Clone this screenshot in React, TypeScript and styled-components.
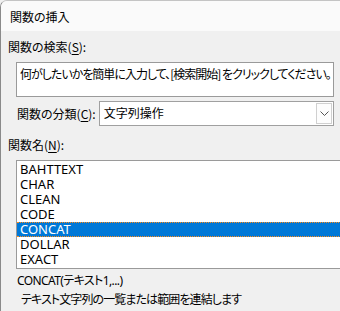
import React from 'react'
import styled, {createGlobalStyle} from 'styled-components'

const GlobalStyle = createGlobalStyle`
    html, body {
        margin: 0;
        padding: 0;
        background: #f0f0f0;
    }
    body {
        font-family: "Noto Sans CJK JP", "Liberation Sans", sans-serif;
        font-size: 12px;
        color: #000;
        font-feature-settings: "palt";
    }
`

const Window = styled.div`
    width: 340px;
    height: 311px;
    box-sizing: border-box;
    border-left: 1px solid #8a8a8a;
    border-top: 1px solid #c4c4c4;
    border-top-left-radius: 7px;
    background: #f0f0f0;
    overflow: hidden;
    display: flex;
    flex-direction: column;
`

const TitleBar = styled.div`
    height: 30px;
    flex: none;
    background: #fafafa;
    display: flex;
    align-items: center;
    padding-left: 9px;
    font-size: 12px;
`

const Body = styled.div`
    display: flex;
    flex-direction: column;
    padding: 8px 6px 0 7px;
`

const Label = styled.div`
    height: 16px;
    line-height: 16px;
    white-space: nowrap;
`

const Key = styled.span`
    text-decoration: underline;
    text-underline-offset: 2px;
`

const SearchBox = styled.div`
    margin: 7px 0 0 8px;
    height: 35px;
    box-sizing: border-box;
    border: 1px solid #9a9a9a;
    background: #fff;
    padding: 3px 0 0 3px;
    line-height: 16px;
    letter-spacing: -1px;
    white-space: nowrap;
    overflow: hidden;
`

const ComboRow = styled.div`
    margin-top: 4px;
    display: flex;
    align-items: center;
    height: 25px;
    padding-left: 9px;
`

const Combo = styled.div`
    margin-left: 3px;
    flex: 1;
    height: 25px;
    box-sizing: border-box;
    border: 1px solid #a0a0a0;
    background: #fff;
    display: flex;
    align-items: stretch;
`

const ComboValue = styled.div`
    flex: 1;
    padding-left: 4px;
    line-height: 22px;
`

const DropButton = styled.div`
    width: 16px;
    box-sizing: border-box;
    border: 1px solid #d0d0d0;
    margin: 1px;
    background: #fdfdfd;
    display: flex;
    align-items: center;
    justify-content: center;
`

const ListLabel = styled(Label)`
    margin-top: 11px;
`

const ListBox = styled.div`
    margin: 7px -20px 0 8px;
    height: 109px;
    box-sizing: border-box;
    border: 1px solid #9a9a9a;
    background: #fff;
    padding-top: 1px;
    font-family: "Noto Sans", "Liberation Sans", sans-serif;
    font-size: 13px;
`

const Item = styled.div<{selected?: boolean}>`
    height: 15px;
    padding-left: 3px;
    box-sizing: border-box;
    white-space: nowrap;
    color: ${p => p.selected ? '#fff' : '#000'};
    background: ${p => p.selected ? '#0078d7' : 'transparent'};
    border-top: ${p => p.selected ? '1px dotted #ff8c1a' : 'none'};
    border-bottom: ${p => p.selected ? '1px dotted #ff8c1a' : 'none'};
    line-height: ${p => p.selected ? '13px' : '15px'};
`

const Syntax = styled.div`
    margin: 4px 0 0 9px;
    height: 16px;
    line-height: 16px;
    font-family: "Noto Sans", "Noto Sans CJK JP", sans-serif;
    letter-spacing: -0.6px;
    white-space: nowrap;
`

const Description = styled.div`
    margin: 2px 0 0 13px;
    height: 16px;
    line-height: 16px;
    letter-spacing: -0.9px;
    white-space: nowrap;
`

const functions = ['BAHTTEXT', 'CHAR', 'CLEAN', 'CODE', 'CONCAT', 'DOLLAR', 'EXACT']

export default function App() {
    return (
        <Window>
            <GlobalStyle/>
            <TitleBar>関数の挿入</TitleBar>
            <Body>
                <Label>関数の検索(<Key>S</Key>):</Label>
                <SearchBox>何がしたいかを簡単に入力して、[検索開始] をクリックしてください。</SearchBox>
                <ComboRow>
                    <Label>関数の分類(<Key>C</Key>):</Label>
                    <Combo>
                        <ComboValue>文字列操作</ComboValue>
                        <DropButton>
                            <svg width="9" height="5" viewBox="0 0 9 5">
                                <path d="M0.5 0.5 L4.5 4.5 L8.5 0.5" fill="none" stroke="#555" strokeWidth="1"/>
                            </svg>
                        </DropButton>
                    </Combo>
                </ComboRow>
                <ListLabel>関数名(<Key>N</Key>):</ListLabel>
                <ListBox>
                    {functions.map(f => (
                        <Item key={f} selected={f === 'CONCAT'}>{f}</Item>
                    ))}
                </ListBox>
                <Syntax>CONCAT(テキスト1,...)</Syntax>
                <Description>テキスト文字列の一覧または範囲を連結します</Description>
            </Body>
        </Window>
    )
}
